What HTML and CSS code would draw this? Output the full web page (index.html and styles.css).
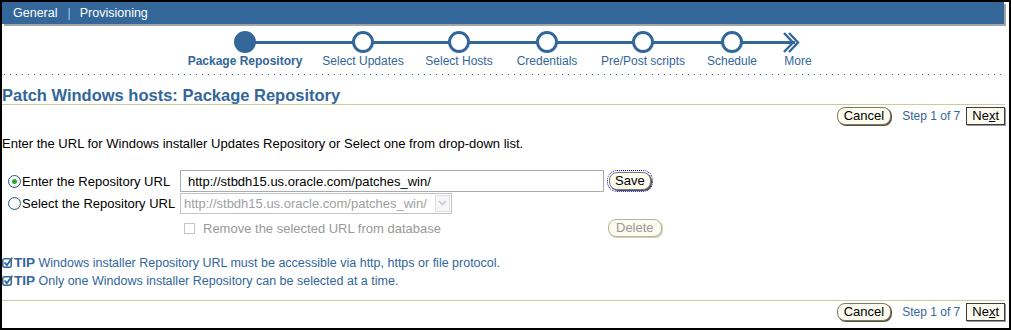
FILE: index.html
```html
<!DOCTYPE html>
<html lang="en">
<head>
    <meta charset="UTF-8">
    <title>Patch Windows hosts: Package Repository</title>
    <link rel="stylesheet" href="styles.css">
</head>
<body>
    <div class="frame">
        <div class="navbar">
            <span>General</span><span class="sep">|</span><span>Provisioning</span>
        </div>

        <!-- wizard train -->
        <div class="train">
            <div class="step current"><span class="node"></span><span class="label">Package Repository</span></div>
            <div class="step"><span class="node"></span><span class="label">Select Updates</span></div>
            <div class="step"><span class="node"></span><span class="label">Select Hosts</span></div>
            <div class="step"><span class="node"></span><span class="label">Credentials</span></div>
            <div class="step"><span class="node"></span><span class="label">Pre/Post scripts</span></div>
            <div class="step"><span class="node"></span><span class="label">Schedule</span></div>
            <div class="step more">
                <svg class="chevron" width="30" height="22" viewBox="0 0 30 22">
                    <line x1="0" y1="11.5" x2="12" y2="11.5" stroke="#336699" stroke-width="3"/>
                    <polyline points="1,2 10,11.5 1,21" fill="none" stroke="#336699" stroke-width="2.4"/>
                    <polyline points="6,2 15,11.5 6,21" fill="none" stroke="#336699" stroke-width="2.4"/>
                </svg>
                <span class="label">More</span>
            </div>
        </div>
        <div class="dots"></div>

        <h1 class="title">Patch Windows hosts: Package Repository</h1>
        <div class="actions">
            <button class="btn">Cancel</button>
            <span class="step-of">Step 1 of 7</span>
            <button class="btn btn-next">Ne<u>x</u>t</button>
        </div>

        <p class="intro">Enter the URL for Windows installer Updates Repository or Select one from drop-down list.</p>

        <div class="repo-form">
            <label class="choice"><span class="radio checked"></span>Enter the Repository URL</label>
            <input class="url-input" type="text" value="http://stbdh15.us.oracle.com/patches_win/">
            <div><button class="btn btn-save">Save</button></div>

            <label class="choice"><span class="radio"></span>Select the Repository URL</label>
            <div class="select disabled">
                <span class="select-text">http://stbdh15.us.oracle.com/patches_win/</span>
                <span class="select-arrow">
                    <svg width="9" height="6" viewBox="0 0 9 6"><polyline points="1,1 4.5,4.5 8,1" fill="none" stroke="#c4c8cc" stroke-width="1.6"/></svg>
                </span>
            </div>
            <div></div>

            <div></div>
            <label class="remove"><span class="checkbox"></span>Remove the selected URL from database</label>
            <div><button class="btn btn-delete" disabled>Delete</button></div>
        </div>

        <div class="tips">
            <div class="tip">
                <svg class="tip-icon" width="11" height="11" viewBox="0 0 11 11">
                    <rect x="0.75" y="1.75" width="8.5" height="8.5" rx="2" fill="none" stroke="#336699" stroke-width="1.5"/>
                    <polyline points="2.5,5.5 4.8,8.2 10.3,0.8" fill="none" stroke="#336699" stroke-width="1.8"/>
                </svg><b>TIP</b> Windows installer Repository URL must be accessible via http, https or file protocol.
            </div>
            <div class="tip">
                <svg class="tip-icon" width="11" height="11" viewBox="0 0 11 11">
                    <rect x="0.75" y="1.75" width="8.5" height="8.5" rx="2" fill="none" stroke="#336699" stroke-width="1.5"/>
                    <polyline points="2.5,5.5 4.8,8.2 10.3,0.8" fill="none" stroke="#336699" stroke-width="1.8"/>
                </svg><b>TIP</b> Only one Windows installer Repository can be selected at a time.
            </div>
        </div>

        <div class="actions bottom">
            <button class="btn">Cancel</button>
            <span class="step-of">Step 1 of 7</span>
            <button class="btn btn-next">Ne<u>x</u>t</button>
        </div>
    </div>
</body>
</html>
```

FILE: styles.css
```css
body {
    margin: 0;
    padding: 0;
    background: #fff;
    font-family: "Liberation Sans", Arial, sans-serif;
}

.frame {
    width: 1011px;
    height: 330px;
    box-sizing: border-box;
    border: 2px solid #000;
    padding-right: 4px;
    overflow: hidden;
    background: #fff;
}

/* top blue bar */

.navbar {
    height: 22px;
    margin-right: 1px;
    padding: 1px 0 0 11px;
    box-sizing: border-box;
    background-color: #336699;
    box-shadow: 2px 2px 0 #a3a3a3;
    color: #fff;
    font-size: 12.5px;
    line-height: 21px;
}

.navbar .sep {
    color: #99ccff;
    margin: 0 9px 0 10px;
}

/* train */

.train {
    display: flex;
    margin: 7px 0 0 183px;
}

.step {
    position: relative;
    display: flex;
    flex-direction: column;
    align-items: center;
}

.step::before {
    content: '';
    position: absolute;
    top: 10px;
    left: 0;
    right: 0;
    height: 3px;
    background-color: #336699;
}

.step:first-child::before {
    left: 50%;
}

.step.more::before {
    right: auto;
    width: 9px;
}

.step:nth-child(1) { width: 120px; }
.step:nth-child(2) { width: 116px; }
.step:nth-child(3) { width: 76px; }
.step:nth-child(4) { width: 100px; }
.step:nth-child(5) { width: 92px; }
.step:nth-child(6) { width: 86px; }
.step:nth-child(7) { width: 46px; }

.node {
    position: relative;
    z-index: 1;
    width: 22px;
    height: 22px;
    box-sizing: border-box;
    border: 3px solid #336699;
    border-radius: 50%;
    background-color: #fff;
}

.step.current .node {
    background-color: #336699;
}

.chevron {
    position: relative;
    z-index: 1;
    display: block;
}

.label {
    margin-top: 1px;
    color: #336699;
    font-size: 12px;
    line-height: 14px;
    white-space: nowrap;
}

.step.current .label {
    font-weight: bold;
}

.dots {
    height: 1px;
    margin: 6px 2px 0 2px;
    background-image: linear-gradient(to right, #336699 1px, transparent 1px);
    background-size: 6px 1px;
}

/* page title and buttons */

.title {
    margin: 11px 0 0 0;
    color: #336699;
    font-size: 16.5px;
    line-height: 18px;
    font-weight: bold;
    border-bottom: 1px solid #cccc99;
}

.actions {
    display: flex;
    justify-content: flex-end;
    align-items: center;
    margin-top: 2px;
}

.actions.bottom {
    margin-top: 10px;
    padding-top: 2px;
    border-top: 1px solid #cccc99;
}

.step-of {
    margin: 0 6px 0 11px;
    color: #336699;
    font-size: 12px;
}

.btn {
    height: 18px;
    padding: 0 6px;
    box-sizing: border-box;
    border: 1px solid #7a7a66;
    border-radius: 8px;
    background-color: #fbfbef;
    box-shadow: 1px 1px 0 #55553f;
    color: #000;
    font-family: "Liberation Sans", Arial, sans-serif;
    font-size: 13px;
    line-height: 16px;
}

.btn-next {
    padding: 0 5px;
    border: 1px solid #3c3c3c;
    border-radius: 0;
    box-shadow: 1px 1px 0 #9a9a9a;
}

.btn-save {
    margin-left: 2px;
    padding: 0 5px;
    outline: 1px dotted #0000ee;
    outline-offset: 1px;
}

.btn-delete {
    margin-left: 1px;
    padding: 0 7px;
    border-color: #b4b49a;
    box-shadow: 1px 1px 0 #cfcfba;
    color: #9a9a9a;
}

.intro {
    margin: 12px 0 0 0;
    font-size: 13px;
    line-height: 14px;
}

/* repository form */

.repo-form {
    display: grid;
    grid-template-columns: 169px 424px auto;
    grid-template-rows: 22px 22px 28px;
    column-gap: 3px;
    align-items: center;
    margin: 19px 0 0 6px;
    font-size: 13px;
}

.choice {
    display: flex;
    align-items: center;
    white-space: nowrap;
}

.radio {
    width: 13px;
    height: 13px;
    margin: 1px 1px 0 0;
    box-sizing: border-box;
    border: 1px solid #1f5a8c;
    border-radius: 50%;
    background: radial-gradient(circle at 40% 40%, #fff 40%, #dcdcd4 100%);
    position: relative;
}

.radio.checked::after {
    content: '';
    position: absolute;
    left: 3px;
    top: 3px;
    width: 5px;
    height: 5px;
    border-radius: 50%;
    background-color: #2ea62e;
}

.url-input {
    width: 424px;
    height: 22px;
    box-sizing: border-box;
    border: 1px solid #a5acb2;
    padding: 0 0 0 7px;
    font-family: "Liberation Sans", Arial, sans-serif;
    font-size: 13px;
    color: #000;
}

.select {
    display: flex;
    align-items: center;
    width: 272px;
    height: 21px;
    box-sizing: border-box;
    border: 1px solid #c0c4c8;
    color: #a0a0a0;
}

.select-text {
    flex: 1;
    padding-left: 3px;
    white-space: nowrap;
    overflow: hidden;
}

.select-arrow {
    display: flex;
    align-items: center;
    justify-content: center;
    width: 15px;
    height: 17px;
    margin-right: 1px;
    box-sizing: border-box;
    border: 1px solid #dde0e3;
    background-color: #f6f6f6;
}

.remove {
    display: flex;
    align-items: center;
    padding-left: 4px;
    color: #999;
    white-space: nowrap;
}

.checkbox {
    width: 11px;
    height: 11px;
    margin-right: 8px;
    box-sizing: border-box;
    border: 1px solid #c6c6c6;
    background-color: #fff;
}

/* tips */

.tips {
    margin-top: 12px;
    color: #336699;
    font-size: 12.5px;
    line-height: 18px;
}

.tip b {
    font-size: 13.5px;
}

.tip-icon {
    margin: 0 1px 0 0;
    vertical-align: -1px;
}
```
